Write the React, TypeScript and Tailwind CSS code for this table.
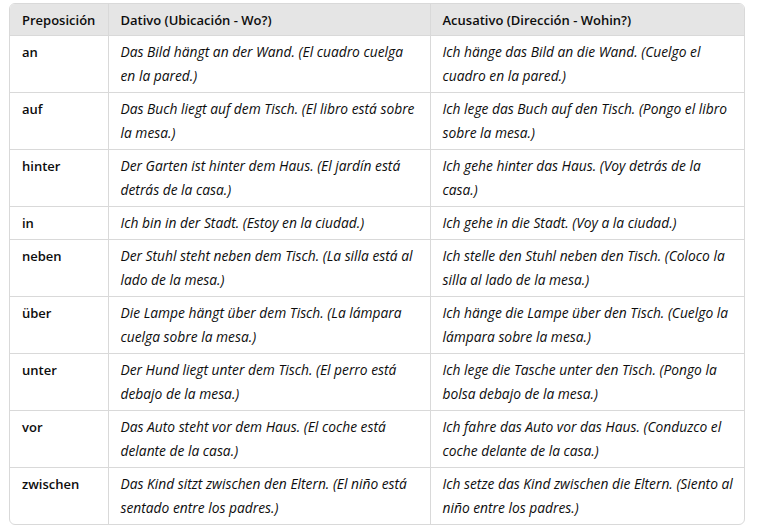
const rows = [
  {
    prep: "an",
    dat: ["Das Bild hängt an der Wand. (El cuadro cuelga", "en la pared.)"],
    acc: ["Ich hänge das Bild an die Wand. (Cuelgo el", "cuadro en la pared.)"],
  },
  {
    prep: "auf",
    dat: ["Das Buch liegt auf dem Tisch. (El libro está sobre", "la mesa.)"],
    acc: ["Ich lege das Buch auf den Tisch. (Pongo el libro", "sobre la mesa.)"],
  },
  {
    prep: "hinter",
    dat: ["Der Garten ist hinter dem Haus. (El jardín está", "detrás de la casa.)"],
    acc: ["Ich gehe hinter das Haus. (Voy detrás de la", "casa.)"],
  },
  {
    prep: "in",
    dat: ["Ich bin in der Stadt. (Estoy en la ciudad.)"],
    acc: ["Ich gehe in die Stadt. (Voy a la ciudad.)"],
  },
  {
    prep: "neben",
    dat: ["Der Stuhl steht neben dem Tisch. (La silla está al", "lado de la mesa.)"],
    acc: ["Ich stelle den Stuhl neben den Tisch. (Coloco la", "silla al lado de la mesa.)"],
  },
  {
    prep: "über",
    dat: ["Die Lampe hängt über dem Tisch. (La lámpara", "cuelga sobre la mesa.)"],
    acc: ["Ich hänge die Lampe über den Tisch. (Cuelgo la", "lámpara sobre la mesa.)"],
  },
  {
    prep: "unter",
    dat: ["Der Hund liegt unter dem Tisch. (El perro está", "debajo de la mesa.)"],
    acc: ["Ich lege die Tasche unter den Tisch. (Pongo la", "bolsa debajo de la mesa.)"],
  },
  {
    prep: "vor",
    dat: ["Das Auto steht vor dem Haus. (El coche está", "delante de la casa.)"],
    acc: ["Ich fahre das Auto vor das Haus. (Conduzco el", "coche delante de la casa.)"],
  },
  {
    prep: "zwischen",
    dat: ["Das Kind sitzt zwischen den Eltern. (El niño está", "sentado entre los padres.)"],
    acc: ["Ich setze das Kind zwischen die Eltern. (Siento al", "niño entre los padres.)"],
  },
];

function Lines({ lines }: { lines: string[] }) {
  return (
    <>
      {lines.map((l, i) => (
        <span key={i} className="block whitespace-nowrap">
          {l}
        </span>
      ))}
    </>
  );
}

export default function App() {
  return (
    <div className="w-[762px] h-[528px] bg-white pt-[3px] pl-[9px] font-['Open_Sans',sans-serif] text-[13px] leading-6 text-[#0d0d0d]">
      <div className="w-[736px] overflow-hidden rounded-md border border-[#d9d9d9]">
        <table className="w-full border-collapse table-fixed">
          <colgroup>
            <col className="w-[98px]" />
            <col className="w-[322px]" />
            <col />
          </colgroup>
          <thead>
            <tr className="bg-[#e5e5e5]">
              <th className="px-3 pt-1 pb-[3px] text-left font-semibold border-r border-[#d9d9d9]">Preposición</th>
              <th className="px-3 pt-1 pb-[3px] text-left font-semibold border-r border-[#d9d9d9]">Dativo (Ubicación - Wo?)</th>
              <th className="px-3 pt-1 pb-[3px] text-left font-semibold">Acusativo (Dirección - Wohin?)</th>
            </tr>
          </thead>
          <tbody>
            {rows.map((r) => (
              <tr key={r.prep} className="border-t border-[#d9d9d9] align-top">
                <td className="px-3 py-1 font-semibold border-r border-[#d9d9d9]">{r.prep}</td>
                <td className="px-3 py-1 italic text-[13.8px] border-r border-[#d9d9d9]">
                  <Lines lines={r.dat} />
                </td>
                <td className="px-3 py-1 italic text-[13.8px]">
                  <Lines lines={r.acc} />
                </td>
              </tr>
            ))}
          </tbody>
        </table>
      </div>
    </div>
  );
}
